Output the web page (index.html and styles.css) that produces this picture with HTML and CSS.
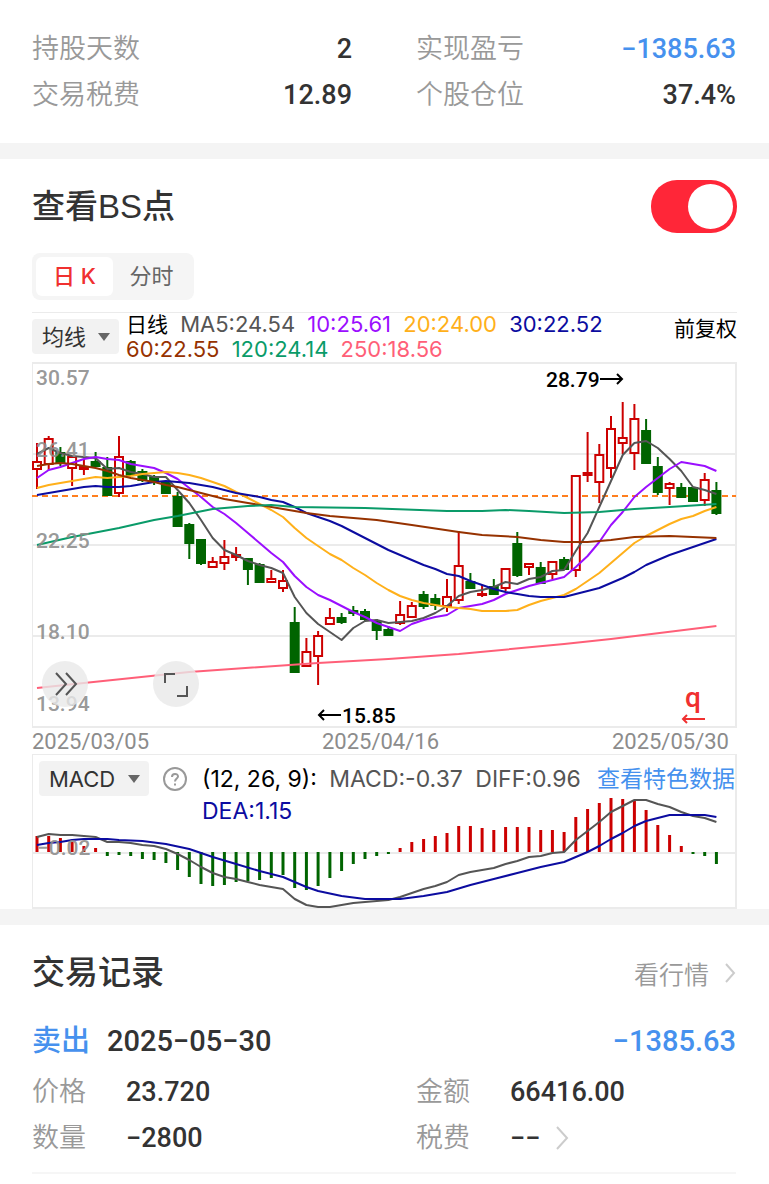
FILE: index.html
```html
<!DOCTYPE html>
<html lang="zh-CN">
<head>
    <meta charset="UTF-8">
    <meta name="viewport" content="width=device-width, initial-scale=1.0">
    <title>交易详情</title>
    <link rel="stylesheet" href="styles.css">
</head>

<body>
    <!-- Position summary -->
    <section class="summary">
        <dl class="pair"><dt>持股天数</dt><dd>2</dd></dl>
        <dl class="pair"><dt>实现盈亏</dt><dd class="blue">−1385.63</dd></dl>
        <dl class="pair"><dt>交易税费</dt><dd>12.89</dd></dl>
        <dl class="pair"><dt>个股仓位</dt><dd>37.4%</dd></dl>
    </section>

    <!-- Chart card -->
    <section class="card chart-card">
        <div class="card-head">
            <h2><label for="bs-switch">查看BS点</label></h2>
            <input type="checkbox" id="bs-switch" class="switch" checked>
        </div>

        <div class="tabs">
            <button type="button" class="tab active">日 K</button>
            <button type="button" class="tab">分时</button>
        </div>

        <div class="legend">
            <div class="picker">
                <select aria-label="均线"><option>均线</option></select>
            </div>
            <p class="ma-list">
                <span class="black">日线</span>
                <span class="ma5">MA5:24.54</span>
                <span class="ma10">10:25.61</span>
                <span class="ma20">20:24.00</span>
                <span class="ma30">30:22.52</span><br>
                <span class="ma60">60:22.55</span>
                <span class="ma120">120:24.14</span>
                <span class="ma250">250:18.56</span>
            </p>
            <span class="adjust">前复权</span>
        </div>

        <div class="kline">
            <svg viewBox="0 0 705 366" role="img" aria-label="日K线">
                <g class="grid">
                    <rect x="0" y="1" width="704" height="364"/>
                    <path d="M0 92H704M0 183H704M0 274H704"/>
                </g>
                <path class="cost-line" d="M0 134H704"/>
                <g id="candles"></g>
                <g id="averages"></g>
                <g class="axis-label">
                    <text x="4" y="23">30.57</text>
                    <text x="4" y="95">26.41</text>
                    <text x="4" y="186">22.25</text>
                    <text x="4" y="277">18.10</text>
                    <text x="4" y="349">13.94</text>
                </g>
                <g class="peak">
                    <text x="514" y="25">28.79</text>
                    <path d="M568 17H590M585 12L590 17L585 22"/>
                    <text x="310" y="361">15.85</text>
                    <path d="M309 353H287M292 348L287 353L292 358"/>
                </g>
                <g class="quit">
                    <text x="653" y="345">q</text>
                    <path d="M673 357H651M655 353L651 357L655 361"/>
                </g>
            </svg>
            <button type="button" class="round-btn more" aria-label="展开">
                <svg viewBox="0 0 46 46"><path d="M14 12L24 23L14 34M24 12L34 23L24 34"/></svg>
            </button>
            <button type="button" class="round-btn full" aria-label="全屏">
                <svg viewBox="0 0 46 46"><path d="M12 22V13H22M34 25V35H24"/></svg>
            </button>
        </div>

        <div class="dates">
            <span>2025/03/05</span>
            <span>2025/04/16</span>
            <span>2025/05/30</span>
        </div>

        <div class="macd">
            <svg viewBox="0 0 705 155" role="img" aria-label="MACD">
                <g class="grid">
                    <rect x="0" y="0" width="704" height="154"/>
                    <path d="M0 99H704"/>
                </g>
                <g id="bars"></g>
                <g id="macd-lines"></g>
                <text class="axis-label" x="5" y="101">−0.02</text>
            </svg>
            <div class="macd-head">
                <div class="picker">
                    <select aria-label="指标"><option>MACD</option></select>
                </div>
                <button type="button" class="help" aria-label="说明">
                    <svg viewBox="0 0 24 24"><circle cx="12" cy="12" r="11"/><path d="M9 10C9 6 15 6 15 9.500C15 11.500 12 11.500 12 14.500"/><path d="M12 16.500V18.500"/></svg>
                </button>
                <p class="macd-values">
                    <span class="black">(12, 26, 9):</span>
                    <span class="ma5">MACD:-0.37</span>
                    <span class="ma5">DIFF:0.96</span><br>
                    <span class="ma30">DEA:1.15</span>
                </p>
                <a href="#" class="feature">查看特色数据</a>
            </div>
        </div>
    </section>

    <!-- Trade records -->
    <section class="card records">
        <div class="card-head">
            <h2>交易记录</h2>
            <a href="#" class="quote">看行情
                <svg class="chevron" viewBox="0 0 12 20"><path d="M2 1L10 10L2 19"/></svg>
            </a>
        </div>

        <div class="trade">
            <div class="trade-head">
                <span class="side">卖出</span>
                <span class="day">2025−05−30</span>
                <span class="profit">−1385.63</span>
            </div>
            <div class="trade-body">
                <dl><dt>价格</dt><dd>23.720</dd></dl>
                <dl><dt>金额</dt><dd>66416.00</dd></dl>
                <dl><dt>数量</dt><dd>−2800</dd></dl>
                <dl>
                    <dt>税费</dt>
                    <dd>−− <svg class="chevron big" viewBox="0 0 14 24"><path d="M2 1L12 12L2 23"/></svg></dd>
                </dl>
            </div>
        </div>
    </section>

    <script src="chart.js"></script>
</body>
</html>
```

FILE: styles.css
```css
* {
    box-sizing: border-box;
}
body {
    font-family: Roboto, "Noto Sans CJK SC", sans-serif;
    background-color: #fff;
    color: #333;
    margin: 0;
}
h2, p, dl, dd {
    margin: 0;
}
button, select {
    font-family: Inter, "Noto Sans CJK SC", sans-serif;
    border: none;
    padding: 0;
    cursor: pointer;
}
a {
    text-decoration: none;
}
svg {
    display: block;
    fill: none;
}

/* summary */
.summary {
    display: grid;
    grid-template-columns: 1fr 1fr;
    column-gap: 64px;
    padding: 26px 33px 25px 32px;
}
.pair {
    display: flex;
    justify-content: space-between;
}
dt, dd {
    font-size: 27px;
    line-height: 46px;
}
dt {
    color: #999;
    font-weight: 350;
}
dd {
    font-weight: 500;
}
.blue {
    color: #4691ee;
}

/* cards */
.card {
    border-top: 16px solid #f4f4f4;
    padding: 0 32px;
}
.card-head {
    display: flex;
    justify-content: space-between;
    align-items: center;
}
.card-head h2 {
    font-family: "Liberation Sans", "Noto Sans CJK SC", sans-serif;
    font-size: 33px;
    line-height: 48px;
    font-weight: 500;
}
.chart-card {
    padding-top: 21px;
}
.switch {
    appearance: none;
    width: 86px;
    height: 53px;
    margin: 0;
    padding: 4px;
    border-radius: 26px;
    background-color: #ccc;
    cursor: pointer;
}
.switch::before {
    content: "";
    display: block;
    width: 45px;
    height: 45px;
    border-radius: 50%;
    background-color: #fff;
}
.switch:checked {
    background-color: #ff2638;
}
.switch:checked::before {
    margin-left: auto;
}

/* tabs */
.tabs {
    display: inline-flex;
    margin-top: 20px;
    padding: 4px;
    border-radius: 8px;
    background-color: #f5f5f5;
}
.tab {
    width: 77px;
    height: 39px;
    padding-bottom: 5px;
    border-radius: 6px;
    background: none;
    color: #666;
    font-size: 22px;
}
.tab.active {
    background-color: #fff;
    color: #f03030;
    font-weight: 500;
}

/* legend */
.legend {
    display: flex;
    height: 50px;
    margin-top: 12px;
    border-top: 1px solid #ebebeb;
    font-family: Inter, "Noto Sans CJK SC", sans-serif;
    font-size: 22px;
}
.picker {
    position: relative;
    flex: none;
}
.picker::after {
    content: "";
    position: absolute;
    right: 9px;
    top: 14px;
    border: 6px solid transparent;
    border-top: 8px solid #666;
    border-bottom: none;
    pointer-events: none;
}
.picker select {
    appearance: none;
    height: 35px;
    padding: 0 10px;
    border-radius: 4px;
    background-color: #f2f2f2;
    color: #333;
    font-size: 22px;
}
.legend .picker {
    margin: 6px 7px 0 0;
}
.legend select {
    width: 87px;
}
.ma-list {
    flex: 1;
    margin-top: -1px;
    line-height: 25px;
    white-space: nowrap;
}
.ma-list span {
    margin-right: 6px;
}
.ma-list .black, .adjust {
    font-size: 21px;
}
.adjust {
    color: #000;
    line-height: 32px;
}
.black {
    color: #000;
}
.ma5 {
    color: #555;
}
.ma10 {
    color: #9b0fff;
}
.ma20 {
    color: #ffb01a;
}
.ma30 {
    color: #0c0ca0;
}
.ma60 {
    color: #963200;
}
.ma120 {
    color: #0a9b69;
}
.ma250 {
    color: #ff5f78;
}

/* charts */
.kline, .macd {
    position: relative;
}
.kline > svg, .macd > svg {
    width: 100%;
}
.grid {
    stroke: #ebebeb;
    stroke-width: 2;
}
.cost-line {
    stroke: #ff7f1e;
    stroke-width: 2;
    stroke-dasharray: 6 4;
}
.up {
    stroke: #cc0000;
    fill: #fff;
    stroke-width: 2;
}
.down {
    stroke: #006400;
    fill: #006400;
    stroke-width: 2;
}
.bar {
    stroke-width: 3;
}
.line {
    stroke: currentColor;
    stroke-width: 2;
    stroke-linejoin: round;
}
.axis-label {
    fill: #8c8c8c;
    fill-opacity: 0.9;
    font-size: 21px;
    font-weight: 500;
}
.peak text {
    fill: #000;
    font-size: 21px;
    font-weight: 500;
}
.peak path {
    stroke: #000;
    stroke-width: 2;
}
.quit text {
    fill: #f03030;
    font-size: 28px;
    font-weight: 500;
}
.quit path {
    stroke: #f03030;
    stroke-width: 2;
}
.round-btn {
    position: absolute;
    bottom: 21px;
    width: 46px;
    height: 46px;
    border-radius: 50%;
    background-color: rgba(232, 232, 232, 0.8);
}
.round-btn path {
    stroke: #555;
    stroke-width: 2;
}
.more {
    left: 10px;
}
.full {
    left: 121px;
}
.dates {
    display: flex;
    justify-content: space-between;
    padding: 2px 8px 0 0;
    color: #8c8c8c;
    font-size: 22px;
    line-height: 24px;
}
.macd-head {
    position: absolute;
    top: 7px;
    left: 7px;
    right: 2px;
    display: flex;
    font-family: Inter, "Noto Sans CJK SC", sans-serif;
    font-size: 23px;
    white-space: nowrap;
}
.macd-head select {
    width: 110px;
}
.help {
    width: 24px;
    height: 24px;
    margin: 6px 15px 0 14px;
    background: none;
}
.help svg {
    stroke: #999;
    stroke-width: 2;
}
.macd-values {
    flex: 1;
    line-height: 32px;
    margin-top: 2px;
}
.macd-values span {
    margin-right: 6px;
}
.feature {
    color: #4691ee;
    line-height: 36px;
}

/* records */
.records {
    padding: 24px 33px 0 32px;
}
.quote {
    display: flex;
    align-items: center;
    color: #999;
    font-size: 25px;
    font-weight: 350;
}
.chevron {
    width: 12px;
    height: 20px;
    margin-left: 15px;
    stroke: #ccc;
    stroke-width: 2;
}
.chevron.big {
    display: inline-block;
    width: 14px;
    height: 24px;
    margin-left: 8px;
    vertical-align: -3px;
}
.trade {
    margin-top: 20px;
    padding-bottom: 11px;
    border-bottom: 2px solid #f6f6f6;
}
.trade-head {
    display: flex;
    gap: 17px;
    font-size: 29px;
    line-height: 48px;
    font-weight: 500;
}
.side, .profit {
    color: #4691ee;
}
.profit {
    margin-left: auto;
}
.trade-body {
    display: grid;
    grid-template-columns: 1fr 1fr;
    column-gap: 64px;
    margin-top: 4px;
}
.trade-body dl {
    display: flex;
    gap: 40px;
}
```

FILE: chart.js
```js
// one slot per trading day
const START = 5;
const STEP = 11.714;
const ZERO = 98;

// [direction, high, body top, body bottom, low]
const candles = [
    ['up', 81, 100, 107, 127], ['up', 74, 77, 102, 108], ['down', 85, 91, 101, 104], ['up', 95, 95, 106, 124],
    ['up', 97, 105, 107, 113], ['down', 90, 100, 104, 105], ['down', 95, 106, 133, 134], ['up', 74, 95, 131, 135],
    ['down', 98, 100, 113, 113], ['down', 107, 110, 118, 120], ['down', 113, 115, 118, 123], ['down', 120, 120, 131, 132],
    ['down', 130, 135, 164, 165], ['down', 161, 163, 181, 197], ['down', 178, 178, 201, 203], ['up', 195, 200, 205, 205],
    ['up', 178, 195, 201, 208], ['up', 185, 193, 195, 199], ['down', 197, 197, 207, 223], ['down', 201, 203, 220, 221],
    ['up', 208, 217, 220, 220], ['up', 208, 219, 226, 230], ['down', 245, 261, 310, 310], ['up', 276, 290, 304, 304],
    ['up', 269, 274, 294, 323], ['up', 246, 256, 262, 262], ['down', 251, 256, 260, 262], ['down', 244, 249, 251, 254],
    ['down', 247, 250, 257, 260], ['down', 257, 260, 268, 278], ['down', 264, 268, 273, 273], ['up', 239, 253, 261, 263],
    ['up', 240, 244, 255, 255], ['down', 229, 233, 244, 247], ['down', 232, 237, 243, 248], ['up', 217, 235, 244, 250],
    ['up', 169, 204, 238, 242], ['down', 211, 220, 226, 227], ['up', 223, 232, 233, 235], ['down', 217, 225, 232, 232],
    ['up', 207, 207, 226, 229], ['down', 170, 182, 213, 215], ['up', 201, 202, 205, 213], ['down', 200, 206, 221, 221],
    ['up', 200, 200, 212, 217], ['down', 195, 198, 207, 208], ['up', 114, 114, 208, 215], ['up', 70, 111, 113, 120],
    ['up', 82, 93, 120, 141], ['up', 54, 67, 106, 116], ['up', 40, 76, 81, 92], ['up', 42, 57, 91, 108],
    ['down', 57, 69, 101, 101], ['down', 95, 105, 130, 133], ['up', 120, 122, 126, 143], ['down', 121, 126, 135, 136],
    ['down', 125, 126, 139, 140], ['up', 111, 118, 138, 144], ['down', 120, 129, 151, 153]
];

// a plain number is one day; [day, y] jumps to that day
const averages = {
    ma5: [92, 86, 91, 94, 95, 96, 107, 106, 110, 112, 115, 115, 128, 141, 158, 176, 188, 193, 199, 203, 206, 211, 235, 251, 262, 270, 278, 266, 259, 258, 261, 260, 259, 256, 251, 244, 234, 230, 228, 225, 220, 222, 217, 215, 209, 208, 189, 171, 145, 119, 93, 81, 79, 86, 97, 109, 125, 128, 132],
    ma10: [116, 108, 105, 101, 97, 95, 97, 98, 102, 104, 106, 111, 117, 126, 135, 145, 152, 161, 171, 181, 191, 200, 214, 225, 233, 238, 244, 250, 255, 261, 265, 269, 262, 258, 255, 253, 246, 244, 242, 238, 232, 228, 224, 221, 218, 215, 205, 194, 180, 163, 150, 135, 125, 116, 107, 100, 102, 104, 109],
    ma20: [126, 123, 121, 119, 117, 115, 116, 115, 114, 112, 111, 110, 111, 113, 116, 120, 124, 130, 136, 142, 148, 155, 166, 176, 184, 192, 198, 206, 213, 221, 228, 234, 238, 241, 243, 245, 246, 247, 249, 249, 249, 248, 243, 239, 236, 233, 227, 219, 211, 201, 191, 181, 174, 168, 162, 157, 154, 149, 145],
    ma30: [133, 131, 129, 127, 125, 124, 125, 125, 124, 122, 120, 119, 120, 121, 123, 125, 128, 131, 133, 135, 138, 140, 145, 151, 155, 159, 164, 170, 176, 182, 188, 193, 198, 203, 207, 212, 214, 219, 223, 227, 230, 232, 234, 235, 235, 235, 232, 229, 226, 221, 216, 210, 203, 198, 193, 189, 185, 181, 177],
    ma60: [104, 102, 101, 102, 104, 106, 109, 113, 116, 118, 120, 123, 125, 128, 131, 134, 137, [18, 141], [21, 147], [23, 151], [25, 154], [27, 156], [29, 158], [32, 163], [36, 170], [38, 173], [41, 175], [43, 178], [45, 180], [47, 180], [49, 178], [51, 175], [54, 174], [56, 175], [58, 176]],
    ma120: [183, [3, 175], [7, 166], [10, 158], [12, 154], [15, 147], [18, 144], [20, 143], [22, 145], [28, 146], [35, 149], [38, 149], [40, 148], [42, 149], [45, 151], [48, 150], [51, 147], [54, 145], [58, 142]],
    ma250: [326, [4, 321], [13, 310], [24, 301], [30, 297], [36, 292], [45, 282], [49, 277], [58, 264]]
};

const bars = [82, 82, 84, 88, 92, 94, 102, 101, 102, 105, 106, 109, 116, 123, 130, 132, 131, 128, 127, 126, 124, 121, 134, 136, 132, 124, 117, 110, 105, 102, 100, 94, 88, 85, 82, 79, 72, 72, 74, 76, 73, 73, 73, 76, 76, 78, 63, 55, 49, 44, 45, 46, 56, 71, 81, 92, 100, 102, 110];

const macdLines = {
    ma5: [83, 80, 81, 81, 82, 83, 88, 88, 89, 91, 92, 95, 100, 106, 113, 119, 123, 125, 128, 131, 133, 135, 145, 151, 153, 153, 151, 149, 148, 147, 146, 143, 139, 135, 132, 128, 121, 118, 116, 114, 110, 107, 103, 102, 99, 98, 86, 77, 68, 58, 52, 46, 46, 50, 53, 58, 62, 64, 68],
    ma30: [91, 89, 88, 86, 85, 85, 85, 86, [9, 87], [11, 90], [13, 95], [15, 103], [17, 110], [19, 117], [21, 123], [23, 133], [24, 137], [26, 142], [28, 145], [31, 145], [33, 142], [35, 138], [37, 131], [39, 125], [41, 119], [43, 113], [45, 108], 103, 98, 92, 85, 79, 72, 67, 64, 61, 61, 61, 61, 63]
};

const x = day => (START + day * STEP).toFixed(1);

function drawLines(id, lines) {
    document.getElementById(id).innerHTML = Object.entries(lines).map(([name, values]) => {
        let day = -1;
        const points = values.map(value => {
            day = Array.isArray(value) ? value[0] : day + 1;
            return x(day) + ',' + (Array.isArray(value) ? value[1] : value);
        });
        return `<polyline class="line ${name}" points="${points.join(' ')}"/>`;
    }).join('');
}

document.getElementById('candles').innerHTML = candles.map(([dir, high, top, bottom, low], day) => `
    <g class="${dir}">
        <path d="M${x(day)} ${high}V${low}"/>
        <rect x="${x(day) - 4}" y="${top}" width="8" height="${bottom - top}"/>
    </g>`).join('');

document.getElementById('bars').innerHTML = bars.map((tip, day) =>
    `<path class="bar ${tip < ZERO ? 'up' : 'down'}" d="M${x(day)} ${ZERO}V${tip}"/>`).join('');

drawLines('averages', averages);
drawLines('macd-lines', macdLines);
```
